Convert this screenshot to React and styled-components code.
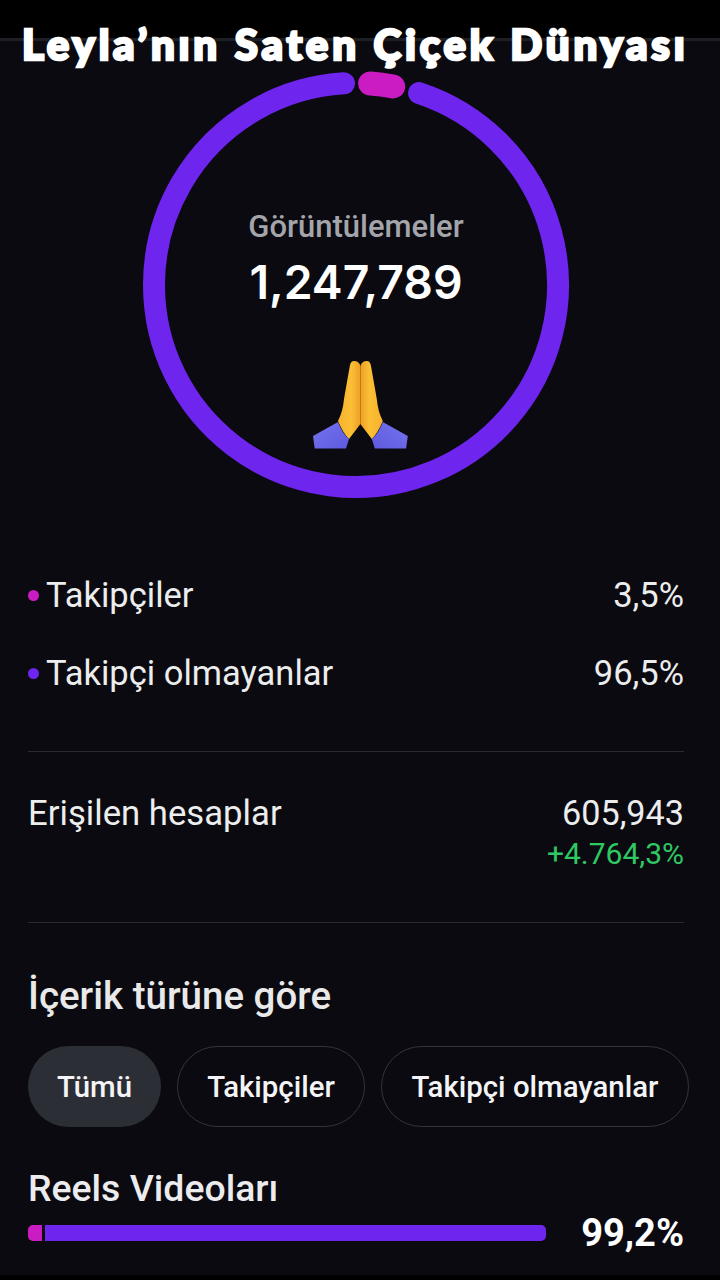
import React from "react";
import styled, { createGlobalStyle } from "styled-components";

const Global = createGlobalStyle`
  html, body { margin: 0; padding: 0; background: #000; }
  * { box-sizing: border-box; }
`;
const Page = styled.div`
  position: relative;
  width: 720px;
  height: 1280px;
  overflow: hidden;
  background: #0a0a10;
  color: #f4f4f6;
  font-family: Roboto, "Noto Sans", sans-serif;
`;
const TopBand = styled.div`
  height: 41px;
  background: #000;
  border-bottom: 3px solid #1e1f24;
`;
const BottomBand = styled.div`
  position: absolute;
  left: 0; right: 0; bottom: 0;
  height: 5px;
  background: #000;
`;
const Caption = styled.div`
  position: absolute;
  top: 17px;
  left: 22px;
  width: 664px;
  text-align: center;
  font-family: Lato, sans-serif;
  font-weight: 900;
  font-size: 42px;
  line-height: 54px;
  letter-spacing: 3.8px;
  white-space: nowrap;
  color: #fff;
  -webkit-text-stroke: 2.6px #fff;
`;
const DonutWrap = styled.div`
  position: relative;
  width: 428px;
  height: 428px;
  margin: 30px 0 0 142px;
`;
const DonutText = styled.div`
  position: absolute;
  inset: 0;
  display: flex;
  flex-direction: column;
  align-items: center;
  padding-top: 140px;
`;
const DonutLabel = styled.div`
  font-size: 31px;
  line-height: 32px;
  font-weight: 500;
  color: #a3a5ab;
`;
const DonutValue = styled.div`
  font-family: Inter, sans-serif;
  font-size: 46.3px;
  line-height: 54px;
  margin-top: 12px;
  font-weight: 600;
  color: #fff;
`;
const Emoji = styled.svg`
  margin: 52px 0 0 9px;
  width: 95px;
  height: 88px;
`;
const Body = styled.div`
  padding: 0 36px 0 28px;
`;
const Legend = styled.div`
  margin-top: 76px;
  display: flex;
  flex-direction: column;
  gap: 38px;
  padding-bottom: 58px;
  border-bottom: 1.5px solid #2a2b30;
`;
const Row = styled.div`
  display: flex;
  justify-content: space-between;
  align-items: center;
  font-size: 34.5px;
  line-height: 40px;
  color: #eceded;
`;
const RowLabel = styled.div`
  display: flex;
  align-items: center;
  gap: 7px;
`;
const Dot = styled.span`
  width: 11px;
  height: 11px;
  border-radius: 50%;
  background: ${p => p.$color};
`;
const Reach = styled.div`
  padding: 41px 0 52px;
  border-bottom: 1.5px solid #2a2b30;
  display: flex;
  justify-content: space-between;
  align-items: flex-start;
`;
const ReachLabel = styled.div`
  font-size: 34.7px;
  line-height: 40px;
  color: #eceded;
`;
const ReachValues = styled.div`
  display: flex;
  flex-direction: column;
  align-items: flex-end;
`;
const ReachValue = styled.div`
  font-size: 34.2px;
  line-height: 40px;
  color: #eceded;
`;
const Delta = styled.div`
  font-size: 30px;
  line-height: 32px;
  margin-top: 5px;
  color: #2fc862;
`;
const Heading = styled.h2`
  margin: 50px 0 0;
  font-size: 38.5px;
  line-height: 46px;
  font-weight: 500;
  color: #e9e9ea;
`;
const Pills = styled.div`
  display: flex;
  gap: 16px;
  margin-top: 27px;
  margin-right: -6px;
`;
const Pill = styled.div`
  height: 81px;
  display: flex;
  align-items: center;
  justify-content: center;
  width: ${p => p.$w}px;
  border-radius: 41px;
  font-size: 29.4px;
  font-weight: 500;
  color: #f4f4f6;
  background: ${p => (p.$active ? "#2c2e35" : "transparent")};
  border: ${p => (p.$active ? "none" : "1.5px solid #34353b")};
`;
const BarTitle = styled.div`
  margin-top: 41px;
  font-size: 37.4px;
  line-height: 40px;
  font-weight: 500;
  color: #ececee;
`;
const BarRow = styled.div`
  display: flex;
  align-items: center;
  justify-content: space-between;
  margin-top: 5px;
  height: 40px;
`;
const Bar = styled.div`
  display: flex;
  gap: 3px;
  width: 518px;
  height: 16px;
`;
const BarSeg = styled.div`
  height: 100%;
  background: ${p => p.$color};
  flex: ${p => (p.$grow ? 1 : `0 0 ${p.$w}px`)};
  border-radius: ${p => (p.$grow ? "0 5px 5px 0" : "5px 0 0 5px")};
`;
const BarValue = styled.div`
  font-size: 38px;
  font-weight: 700;
  color: #fff;
`;

const PURPLE = "#6e25ee";
const MAGENTA = "#cb1cc4";

function arc(a0, a1, r = 202, c = 214) {
  const p = a => {
    const t = ((a - 90) * Math.PI) / 180;
    return [c + r * Math.cos(t), c + r * Math.sin(t)];
  };
  const [x0, y0] = p(a0);
  const [x1, y1] = p(a1);
  const large = a1 - a0 > 180 ? 1 : 0;
  return `M${x0} ${y0}A${r} ${r} 0 ${large} 1 ${x1} ${y1}`;
}

const Donut = () => (
  <svg width="428" height="428" viewBox="0 0 428 428">
    <path d={arc(18.2, 356.6)} fill="none" stroke={PURPLE} strokeWidth="22" strokeLinecap="round" />
    <path d={arc(4, 10.6)} fill="none" stroke={MAGENTA} strokeWidth="24" strokeLinecap="round" />
  </svg>
);

const handPath = "M41 0Q46 0 47.4 5L47.4 63 36 78Q30 72 25 60 30 50 31 38 35 15 37 4 38 0 41 0Z";
const sleevePath = "M25 61 0 75 1.7 87.6H33L36 78Q29 72 25 61Z";

const Pray = () => (
  <Emoji viewBox="0 0 95 88">
    <defs>
      <linearGradient id="hand" x1="0" y1="0" x2="1" y2="0">
        <stop offset="0" stopColor="#f7b22b" />
        <stop offset="0.6" stopColor="#fbbf36" />
        <stop offset="1" stopColor="#ee9f22" />
      </linearGradient>
      <linearGradient id="sleeve" x1="0" y1="0" x2="1" y2="1">
        <stop offset="0" stopColor="#7674ee" />
        <stop offset="1" stopColor="#5d5adf" />
      </linearGradient>
    </defs>
    <path d={handPath} fill="url(#hand)" />
    <path d={sleevePath} fill="url(#sleeve)" />
    <g transform="matrix(-1 0 0 1 94.8 0)">
      <path d={handPath} fill="url(#hand)" />
      <path d={sleevePath} fill="url(#sleeve)" />
    </g>
  </Emoji>
);

export default function App() {
  return (
    <Page>
      <Global />
      <TopBand />
      <Caption>Leyla’nın Saten Çiçek Dünyası</Caption>
      <DonutWrap>
        <Donut />
        <DonutText>
          <DonutLabel>Görüntülemeler</DonutLabel>
          <DonutValue>1,247,789</DonutValue>
          <Pray />
        </DonutText>
      </DonutWrap>
      <Body>
        <Legend>
          <Row>
            <RowLabel><Dot $color={MAGENTA} />Takipçiler</RowLabel>
            <span>3,5%</span>
          </Row>
          <Row>
            <RowLabel><Dot $color={PURPLE} />Takipçi olmayanlar</RowLabel>
            <span>96,5%</span>
          </Row>
        </Legend>
        <Reach>
          <ReachLabel>Erişilen hesaplar</ReachLabel>
          <ReachValues>
            <ReachValue>605,943</ReachValue>
            <Delta>+4.764,3%</Delta>
          </ReachValues>
        </Reach>
        <Heading>İçerik türüne göre</Heading>
        <Pills>
          <Pill $active $w={133}>Tümü</Pill>
          <Pill $w={188}>Takipçiler</Pill>
          <Pill $w={308}>Takipçi olmayanlar</Pill>
        </Pills>
        <BarTitle>Reels Videoları</BarTitle>
        <BarRow>
          <Bar>
            <BarSeg $color={MAGENTA} $w={14} />
            <BarSeg $color={PURPLE} $grow />
          </Bar>
          <BarValue>99,2%</BarValue>
        </BarRow>
      </Body>
      <BottomBand />
    </Page>
  );
}
